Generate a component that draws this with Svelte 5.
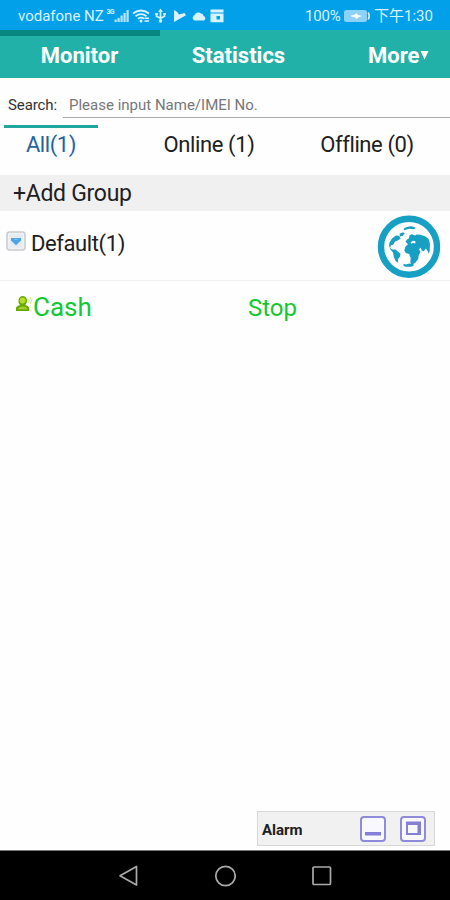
<script>
  let activeFilter = $state('all');
  let expanded = $state(true);
  let query = $state('');

  const filters = [
    { id: 'all', label: 'All(1)' },
    { id: 'online', label: 'Online (1)' },
    { id: 'offline', label: 'Offline (0)' }
  ];
</script>

<div class="screen">
  <div class="status">
    <span class="carrier">vodafone NZ</span>
    <svg class="status-icons" width="120" height="20" viewBox="0 0 120 20" fill="currentColor">
      <text x="0.5" y="7.500" font-size="7" font-weight="700" textLength="8">3G</text>
      <path d="M8.500 13.500h2.200V16H8.500zM11.500 12h2.200v4h-2.200zM14.500 9.500h2.200V16h-2.200zM17.500 7h2.200v9h-2.200zM20.500 4h2.200v12h-2.200z" opacity=".85" />
      <g fill="none" stroke="currentColor" stroke-width="1.800">
        <path d="M27 7.500q8-6 16 0M29.500 10.200q5.500-4 11 0M32 12.800q3-2.200 6 0" />
      </g>
      <circle cx="35" cy="15" r="1.500" />
      <path d="M38.500 11.500h4.500v1.500h-4.500zM38.500 14.200h4.500v1.500h-4.500z" />
      <g fill="none" stroke="currentColor" stroke-width="1.700">
        <path d="M54.500 4v12M50.500 7.500v2.700l4 2 4-2V7.500" />
      </g>
      <path d="M54.500 2.500l2.300 3.500h-4.600zM49.300 7h2.500v2h-2.500zM57.300 7h2.500v2h-2.500z" />
      <circle cx="54.500" cy="15" r="1.700" />
      <path d="M68 4l3.200 2 1.800 2.500 5.500-1.500 1.500 2.200L68 16z" />
      <path d="M88.500 14.500a3 3 0 0 1 .2-5.600 4 4 0 0 1 6.300-1.400 3 3 0 0 1 2.600 2.600 2.300 2.300 0 0 1 .2 4.400z" />
      <path d="M104.500 3.500h13v3h-13zM104.500 7.500h13v8.700h-13zM110.500 10v3.500h3.500V10z" fill-rule="evenodd" />
    </svg>
    <span class="percent">100%</span>
    <svg class="battery" width="27" height="14" viewBox="0 0 27 14">
      <rect x="0" y="1" width="23" height="12" rx="2.500" fill="#8bd2f6" />
      <path d="M24.300 3.500q1.800 3.500 0 7" fill="none" stroke="#d8f1fd" stroke-width="1.600" />
      <path d="M6 7l5-1.500 1.500-1.500 1 1.700L18 7l-4 1.500L12.500 10l-1.200-1.600z" fill="#fff" />
    </svg>
    <span class="clock">下午1:30</span>
  </div>

  <nav class="menu">
    <span class="indicator"></span>
    <span class="monitor">Monitor</span>
    <span class="statistics">Statistics</span>
    <span class="more">More<svg width="9" height="9" viewBox="0 0 9 9"><path d="M.5 0h8L4.500 8.500z" fill="#fff" /></svg></span>
  </nav>

  <div class="search">
    <label for="search">Search:</label>
    <input id="search" placeholder="Please input Name/IMEI No." bind:value={query} />
  </div>

  <div class="filters">
    {#each filters as filter (filter.id)}
      <button
        type="button"
        class={filter.id}
        class:active={activeFilter === filter.id}
        onclick={() => (activeFilter = filter.id)}
      >{filter.label}</button>
    {/each}
  </div>

  <div class="add-group">+Add Group</div>

  <div class="group">
    <button type="button" class="toggle" aria-label="Toggle group" onclick={() => (expanded = !expanded)}>
      <svg width="20" height="20" viewBox="0 0 20 20">
        <rect x="1" y="1" width="18" height="18" rx="2.500" fill="#f2f2f3" stroke="#c8cbd0" stroke-width="1.500" />
        <rect x="3.500" y="3.500" width="13" height="13" fill="#e5ebf2" />
        <path d="M5 7h10v2.500L10 14.300 5 9.500z" fill="#4ba3e8" />
        <path d="M7.500 7.800h5L10 9.300z" fill="#86c8f5" />
      </svg>
    </button>
    <span class="group-name">Default(1)</span>
    <svg class="globe" width="64" height="64" viewBox="0 0 64 64">
      <circle cx="32" cy="31.700" r="28" fill="#fff" stroke="#179fc4" stroke-width="6.400" />
      <g fill="#179fc4">
        <path d="M26.500 14q3-2.800 8-2.800l4 1.300-1.200 1.700-5.300-.5-4.500 1.500z" />
        <path d="M22.500 18.800l3.500-1.500 1.700 1-1.700 2.500-3 .7z" />
        <path d="M12.500 27.500l2.500-4 4-3 3.200.2 1.300 3-2.800 1.800-2.700 1-1.800 3.300-2.400.4-.6 2.800 2.300 1.500h3l5 4.300-.5 3-2 2.200v3.800l-2.200-1.600-1.900-4-.8-4.400-2.800-3.600-1.300-3.700z" />
        <path d="M28.500 26.500l1.500-2 2-1.300.5-3 2.500-1 3 1.300 1.700-1 3.800.2 4.500 1.500 3.500 2.500 1.500 5-.3 6.300-.7 4-2-4-1.500-1.500-1.500 2.800-2-.5-1.500-3.300-1.500 2 1.500 2.200-1.700 3.500-.8 4-2.700 3.500-3.800 2.200-1.200-3 .4-3.800-1.500-4-3.400-1-1.500-2.500 1-3.800 2.700-2.500-1.500-1.500z" />
        <path d="M26.500 48.700l2.500.7 3-.9 4.500.6v1.800q-5 1.800-10 0z" />
      </g>
      <path d="M33.500 27.300l2.500-1.500 2.500.5-.3 2.300-2.200-.5-1.700.7z" fill="#fff" />
    </svg>
  </div>

  {#if expanded}
    <div class="device">
      <svg width="18" height="18" viewBox="0 0 18 18">
        <path d="M1 16v-3.500q1.500-2 4-2.500Q3 8 3.500 5 4.500 1 7.800 1q3.500.3 4.200 4 .2 3-1.700 5 3 .5 3.900 2.500V16z" fill="#67a800" />
        <circle cx="7.600" cy="5.500" r="2.900" fill="#b4de27" />
        <path d="M2.500 14.300q1.500-2.500 5.300-2.800 3.700.2 4.800 2.800z" fill="#a4d51e" />
        <path d="M13.500 3.500q1 2 0 4M15.500 2q1.800 3.500 0 7" fill="none" stroke="#cce893" />
      </svg>
      <span class="device-name">Cash</span>
      <span class="device-state">Stop</span>
    </div>
  {/if}

  <div class="alarm">
    <span>Alarm</span>
    <svg width="26" height="26" viewBox="0 0 26 26">
      <rect x="1" y="1" width="24" height="24" rx="3" fill="#f8f8fe" stroke="#8f8adb" stroke-width="2" />
      <path d="M5 16h16v3.500H5z" fill="#8580d5" />
    </svg>
    <svg width="26" height="26" viewBox="0 0 26 26">
      <rect x="1" y="1" width="24" height="24" rx="3" fill="#f8f8fe" stroke="#8f8adb" stroke-width="2" />
      <path d="M6 5.500h15V19H6zM8 9v8h9.500V9z" fill="#8580d5" fill-rule="evenodd" />
    </svg>
  </div>

  <div class="navbar">
    <svg width="20" height="22" viewBox="0 0 20 22"><path d="M18.500 1.500v18.500L2 10.800z" /></svg>
    <svg width="22" height="22" viewBox="0 0 22 22"><circle cx="11.500" cy="11" r="9.700" /></svg>
    <svg width="20" height="20" viewBox="0 0 20 20"><rect x="1" y="1" width="17.500" height="17.500" rx="1" /></svg>
  </div>
</div>

<style>
  :global(body) {
    background: #fff;
  }
  .screen {
    display: flex;
    flex-direction: column;
    width: 450px;
    height: 900px;
    overflow: hidden;
    background: #fefefe;
    color: #202020;
    font-family: Roboto, "Noto Sans CJK SC", sans-serif;
    white-space: nowrap;
  }
  svg {
    display: block;
    flex: none;
  }
  button {
    padding: 0;
    border: 0;
    background: none;
    color: inherit;
    font: inherit;
  }
  .status {
    display: flex;
    align-items: center;
    height: 30px;
    padding: 2px 0 0 18px;
    box-sizing: border-box;
    background: #03a0ea;
    color: #d9f2ff;
    font-size: 15px;
  }
  .carrier {
    width: 88px;
  }
  .percent {
    width: 39px;
    margin-left: 79px;
    letter-spacing: -0.2px;
  }
  .clock {
    margin: -3px 0 0 3px;
  }
  .menu {
    display: grid;
    grid-template-columns: 159px 159px 132px;
    grid-template-rows: 6px 42px;
    height: 48px;
    box-sizing: border-box;
    background: #22b1a8;
    color: #fff;
    font-size: 22px;
    font-weight: 700;
    line-height: 40px;
    text-align: center;
  }
  .indicator {
    width: 160px;
    grid-column: 1;
    background: #078780;
  }
  .monitor,
  .statistics {
    grid-row: 2;
  }
  .more {
    display: flex;
    grid-row: 2;
    height: 40px;
    align-items: center;
    padding-left: 50px;
  }
  .more svg {
    margin: -2px 0 0 1px;
  }
  .search {
    display: flex;
    height: 47px;
    padding: 15px 0 0 8px;
    box-sizing: border-box;
    font-size: 15px;
  }
  .search label {
    width: 55px;
    color: #333;
    letter-spacing: -0.1px;
    line-height: 25px;
  }
  .search input {
    flex: 1;
    height: 25px;
    padding: 0 0 0 6px;
    box-sizing: border-box;
    border: 0;
    border-bottom: 1px solid #aaa;
    border-radius: 0;
    outline: none;
    background: none;
    font: inherit;
  }
  .search input::placeholder {
    color: #777;
  }
  .filters {
    display: flex;
    height: 50px;
    font-size: 22px;
    letter-spacing: -0.4px;
  }
  .filters button {
    height: 37px;
    border-top: 3px solid transparent;
    letter-spacing: inherit;
    line-height: 32px;
  }
  .filters .all {
    width: 94px;
    margin-left: 4px;
    color: #23639c;
  }
  .filters .online {
    width: 140px;
    margin-left: 41px;
  }
  .filters .offline {
    width: 140px;
    margin-left: 18px;
  }
  .filters .active {
    border-color: #20a6a0;
  }
  .add-group {
    height: 36px;
    padding-left: 13px;
    background: #f0f0f0;
    font-size: 23px;
    letter-spacing: -0.3px;
    line-height: 38px;
  }
  .group {
    display: flex;
    height: 70px;
    padding-left: 6px;
    box-sizing: border-box;
    border-bottom: 1px solid #f0f0f0;
  }
  .toggle {
    height: 20px;
    margin-top: 20px;
  }
  .group-name {
    margin-left: 5px;
    font-size: 22px;
    letter-spacing: -0.4px;
    line-height: 65px;
  }
  .globe {
    margin: 4px 9px 0 auto;
  }
  .device {
    display: flex;
    height: 52px;
    padding-left: 15px;
    color: #12c932;
    line-height: 52px;
  }
  .device svg {
    margin-top: 14px;
  }
  .device-name {
    width: 215px;
    font-size: 26px;
  }
  .device-state {
    font-size: 24px;
    line-height: 54px;
  }
  .alarm {
    display: flex;
    align-items: center;
    gap: 14px;
    width: 178px;
    height: 35px;
    margin: auto 15px 4px auto;
    padding: 0 8px 0 4px;
    box-sizing: border-box;
    border: 1px solid #d8d8d8;
    background: #f1f1f1;
    font-size: 15px;
    font-weight: 700;
  }
  .alarm span {
    flex: 1;
    padding-top: 2px;
  }
  .navbar {
    display: flex;
    align-items: center;
    height: 50px;
    padding-left: 118px;
    box-sizing: border-box;
    border-top: 1px solid #777;
    background: #000;
    gap: 76px;
  }
  .navbar svg {
    fill: none;
    stroke: #aaa;
    stroke-width: 1.700;
    stroke-linejoin: round;
  }
</style>
